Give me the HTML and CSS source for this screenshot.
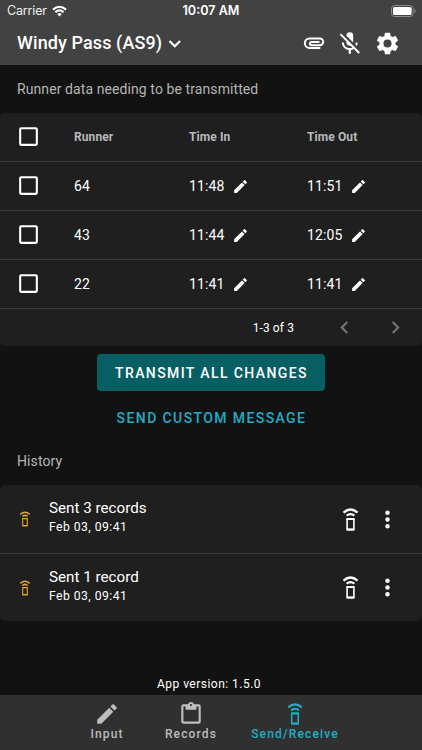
FILE: index.html
```html
<!DOCTYPE html>
<html lang="en">
<head>
<meta charset="utf-8">
<title>Windy Pass</title>
<link rel="stylesheet" href="styles.css">
</head>
<body>
<svg class="defs" width="0" height="0">
  <symbol id="pencil" viewBox="0 0 24 24"><path d="M3 17.25V21h3.75L17.8 9.94l-3.75-3.75L3 17.25zM20.7 7.04a1 1 0 0 0 0-1.41l-2.34-2.34a1 1 0 0 0-1.41 0l-1.83 1.83 3.75 3.75 1.83-1.83z" fill="currentColor"/></symbol>
  <symbol id="box" viewBox="0 0 24 24"><path d="M19 5v14H5V5h14m0-2H5a2 2 0 0 0-2 2v14c0 1.1.9 2 2 2h14a2 2 0 0 0 2-2V5a2 2 0 0 0-2-2z" fill="currentColor"/></symbol>
  <symbol id="remote" viewBox="0 0 27 27"><g fill="none" stroke="currentColor"><path d="M6.5 6.6q7-6.2 14 0M9.6 9.7q3.9-3.3 7.8 0" stroke-width="2.2"/><rect x="10.1" y="12.8" width="6.8" height="10.8" rx=".5" stroke-width="1.6"/><path d="M9.5 12.9h8M9.5 23.4h8" stroke-width="2"/></g></symbol>
  <symbol id="chevron" viewBox="0 0 24 24"><path d="M8.6 16.6 13.2 12 8.6 7.4 10 6l6 6-6 6z" fill="currentColor"/></symbol>
  <symbol id="dots" viewBox="0 0 24 24"><path d="M12 8a2 2 0 1 0 0-4 2 2 0 0 0 0 4zm0 2a2 2 0 1 0 0 4 2 2 0 0 0 0-4zm0 6a2 2 0 1 0 0 4 2 2 0 0 0 0-4z" fill="currentColor"/></symbol>
</svg>
<header class="top">
  <div class="status">
    <div class="carrier"><span>Carrier</span>
      <svg class="wifi" viewBox="0 0 16 12"><g fill="none" stroke="currentColor" stroke-width="2.2"><path d="M1 4.5q7-6 14 0M3.6 7.3q4.4-3.8 8.8 0"/></g><path d="M5.5 9.2q2.5-2 5 0L8 11.8z" fill="currentColor"/></svg>
    </div>
    <div class="clock">10:07 AM</div>
    <div class="battery-wrap">
      <svg class="battery" viewBox="0 0 25 12"><rect x=".5" y=".5" width="21.6" height="11" rx="3" fill="none" stroke="#8c8c8c"/><rect x="2" y="2" width="18.6" height="8" rx="1.6" fill="#fff"/><path d="M23.4 4v4q1.2-.6 1.2-2t-1.2-2z" fill="#8c8c8c"/></svg>
    </div>
  </div>
  <div class="toolbar">
    <h1>Windy Pass (AS9)</h1>
    <svg class="caret" viewBox="0 0 14 10"><path d="m1.5 2 5.3 5.3L12.1 2" fill="none" stroke="currentColor" stroke-width="2.2"/></svg>
    <div class="actions">
      <svg class="icon" viewBox="0 0 27 27"><path d="M19.3 18H8.6a4.8 4.8 0 0 1 0-9.6h10.2a3.4 3.4 0 0 1 0 6.8h-8.3a1.6 1.6 0 0 1 0-3.2h8" fill="none" stroke="currentColor" stroke-width="2"/></svg>
      <svg class="icon mic" viewBox="0 0 24 24"><path d="M19 11h-1.7c0 .74-.16 1.43-.43 2.05l1.23 1.23c.56-.98.9-2.09.9-3.28zm-4.02.17c0-.06.02-.11.02-.17V5a3 3 0 0 0-6 0v.18l5.98 5.99zM4.27 3 3 4.27l6.01 6.01V11a3 3 0 0 0 3.66 2.93l1.66 1.66c-.71.33-1.5.51-2.33.51-2.76 0-5.3-2.1-5.3-5.1H5c0 3.41 2.72 6.23 6 6.72V21h2v-3.28c.91-.13 1.77-.45 2.54-.9L19.73 21 21 19.73 4.27 3z" fill="currentColor"/></svg>
      <svg class="icon" viewBox="0 0 24 24"><path d="M19.14 12.94c.04-.3.06-.61.06-.94s-.02-.64-.07-.94l2.03-1.58a.49.49 0 0 0 .12-.61l-1.92-3.32a.49.49 0 0 0-.59-.22l-2.39.96a7 7 0 0 0-1.62-.94l-.36-2.54a.48.48 0 0 0-.48-.41h-3.84a.47.47 0 0 0-.47.41l-.36 2.54a7.4 7.4 0 0 0-1.62.94l-2.39-.96a.48.48 0 0 0-.59.22L2.74 8.87a.47.47 0 0 0 .12.61l2.03 1.58a6 6 0 0 0-.02 1.88l-2.03 1.58a.49.49 0 0 0-.12.61l1.92 3.32c.12.22.37.29.59.22l2.39-.96c.5.38 1.03.7 1.62.94l.36 2.54c.05.24.24.41.48.41h3.84c.24 0 .44-.17.47-.41l.36-2.54a7 7 0 0 0 1.62-.94l2.39.96c.22.08.47 0 .59-.22l1.92-3.32a.47.47 0 0 0-.12-.61l-2.01-1.58zM12 15.6a3.6 3.6 0 1 1 0-7.2 3.6 3.6 0 0 1 0 7.2z" fill="currentColor"/></svg>
    </div>
  </div>
</header>
<main>
  <h2 class="subheader">Runner data needing to be transmitted</h2>
  <section class="card table">
    <div class="row head"><svg class="check"><use href="#box"/></svg><span>Runner</span><span>Time In</span><span>Time Out</span></div>
    <div class="row"><svg class="check"><use href="#box"/></svg><span>64</span><span class="time"><b>11:48</b><svg><use href="#pencil"/></svg></span><span class="time"><b>11:51</b><svg><use href="#pencil"/></svg></span></div>
    <div class="row"><svg class="check"><use href="#box"/></svg><span>43</span><span class="time"><b>11:44</b><svg><use href="#pencil"/></svg></span><span class="time"><b>12:05</b><svg><use href="#pencil"/></svg></span></div>
    <div class="row"><svg class="check"><use href="#box"/></svg><span>22</span><span class="time"><b>11:41</b><svg><use href="#pencil"/></svg></span><span class="time"><b>11:41</b><svg><use href="#pencil"/></svg></span></div>
    <div class="pager"><span>1-3 of 3</span><svg class="prev"><use href="#chevron"/></svg><svg><use href="#chevron"/></svg></div>
  </section>
  <div class="buttons">
    <button class="primary">TRANSMIT ALL CHANGES</button>
    <button class="link">SEND CUSTOM MESSAGE</button>
  </div>
  <h2 class="subheader history">History</h2>
  <section class="card list">
    <div class="item"><svg class="sent"><use href="#remote"/></svg><div class="text"><p>Sent 3 records</p><small>Feb 03, 09:41</small></div><svg class="icon"><use href="#remote"/></svg><svg class="icon more"><use href="#dots"/></svg></div>
    <div class="item"><svg class="sent"><use href="#remote"/></svg><div class="text"><p>Sent 1 record</p><small>Feb 03, 09:41</small></div><svg class="icon"><use href="#remote"/></svg><svg class="icon more"><use href="#dots"/></svg></div>
  </section>
  <p class="version">App version: 1.5.0</p>
</main>
<nav class="tabs">
  <a class="tab input"><svg class="icon"><use href="#pencil"/></svg><span>Input</span></a>
  <a class="tab records"><svg class="icon" viewBox="0 0 24 24"><path d="M19 3h-4.18a3 3 0 0 0-5.64 0H5a2 2 0 0 0-2 2v14c0 1.1.9 2 2 2h14a2 2 0 0 0 2-2V5a2 2 0 0 0-2-2zm-7-.2a1 1 0 1 1 0 2 1 1 0 0 1 0-2zM19 19H5V5h2v3h10V5h2z" fill="currentColor"/></svg><span>Records</span></a>
  <a class="tab active"><svg class="icon"><use href="#remote"/></svg><span>Send/Receive</span></a>
</nav>
</body>
</html>
```
FILE: styles.css
```css
* { box-sizing: border-box; }
body {
  margin: 0;
  width: 422px;
  height: 750px;
  display: flex;
  flex-direction: column;
  overflow: hidden;
  background: #121212;
  color: #fff;
  font-family: Roboto, sans-serif;
}
h1, h2, p { margin: 0; }
svg { display: block; flex: none; }
.defs { display: none; }
.icon { width: 27px; height: 27px; }

.top { height: 64.5px; background: #424242; flex: none; }
.status {
  height: 22px;
  display: grid;
  grid-template-columns: 1fr auto 1fr;
  align-items: center;
  padding: 0 7px;
  font: 13.3px/22px Inter, sans-serif;
}
.carrier { display: flex; align-items: center; gap: 5px; color: #eee; font-size: 12.5px; letter-spacing: -.15px; }
.wifi { width: 15px; height: 12px; color: #fff; }
.clock { font-weight: 600; font-size: 12.6px; }
.battery-wrap { display: flex; justify-content: flex-end; margin-right: -1px; }
.battery { width: 25px; height: 12px; }
.toolbar { height: 42px; display: flex; align-items: center; padding: 0 21px 0 17px; }
.toolbar h1 { font-size: 18px; font-weight: 500; line-height: 24px; letter-spacing: .1px; }
.caret { width: 14px; height: 10px; margin: 2px 0 0 6px; }
.actions { display: flex; gap: 9.5px; margin-left: auto; }
.mic { margin: 0 .5px 0 -.5px; transform: translateX(-.7px); }

main { flex: 1; display: flex; flex-direction: column; }
.subheader {
  height: 48.5px;
  padding-left: 17px;
  font-size: 14px;
  font-weight: 400;
  line-height: 49px;
  letter-spacing: .09px;
  color: #b5b5b5;
}
.card { background: #1f1f1f; border-radius: 5px; }
.row {
  height: 49.1px;
  display: grid;
  grid-template-columns: 58px 115px 118px 1fr;
  align-items: center;
  padding-left: 16px;
  border-bottom: 1px solid #383838;
  font-size: 14px;
  letter-spacing: .1px;
}
.check { width: 25px; height: 25px; color: #fff; margin-top: -1px; }
.head { color: #b9b9b9; font-size: 12px; font-weight: 700; }
.time { display: flex; align-items: center; }
.time b { font-weight: 400; width: 43px; }
.time svg { width: 17px; height: 17px; margin-top: 1px; }
.pager { height: 36.6px; display: flex; align-items: center; justify-content: flex-end; padding-right: 14px; font-size: 12px; letter-spacing: .1px; }
.pager svg { width: 25px; height: 25px; color: #777; }
.pager .prev { transform: rotate(180deg); margin: 0 26px 0 38px; }

.buttons { display: flex; flex-direction: column; align-items: center; padding-top: 8.3px; }
button { border: 0; padding: 0; background: none; font: 500 14px/38px Roboto, sans-serif; letter-spacing: 1.4px; text-indent: 1px; }
.primary { width: 228px; height: 36.7px; border-radius: 4px; background: #075e63; color: #fff; }
.link { height: 54px; line-height: 54px; color: #22adc4; }
.history { height: 40px; line-height: 32px; }
.item { height: 68.2px; display: flex; align-items: center; padding: 0 21.5px 0 16px; }
.item + .item { border-top: 1px solid #383838; }
.sent { width: 18px; height: 18px; color: #e6a820; }
.text { flex: 1; margin: -3px 0 0 15px; }
.text p { font-size: 15.2px; line-height: 19px; }
.text small { display: block; font-size: 12.2px; line-height: 18px; letter-spacing: .45px; }
.more { margin-left: 9.5px; }
.version { margin-top: auto; padding-bottom: 3px; text-align: center; font-size: 12px; line-height: 16px; letter-spacing: .48px; text-indent: -4px; }

.tabs { height: 55px; flex: none; background: #303030; display: flex; justify-content: center; color: #bdbdbd; }
.tab { width: 84px; display: flex; flex-direction: column; align-items: center; padding-top: 6px; font-size: 12px; font-weight: 500; line-height: 15px; letter-spacing: 1.15px; }
.tab .icon { width: 26px; height: 26px; }
.active { width: 124px; color: #22adc4; }
```
